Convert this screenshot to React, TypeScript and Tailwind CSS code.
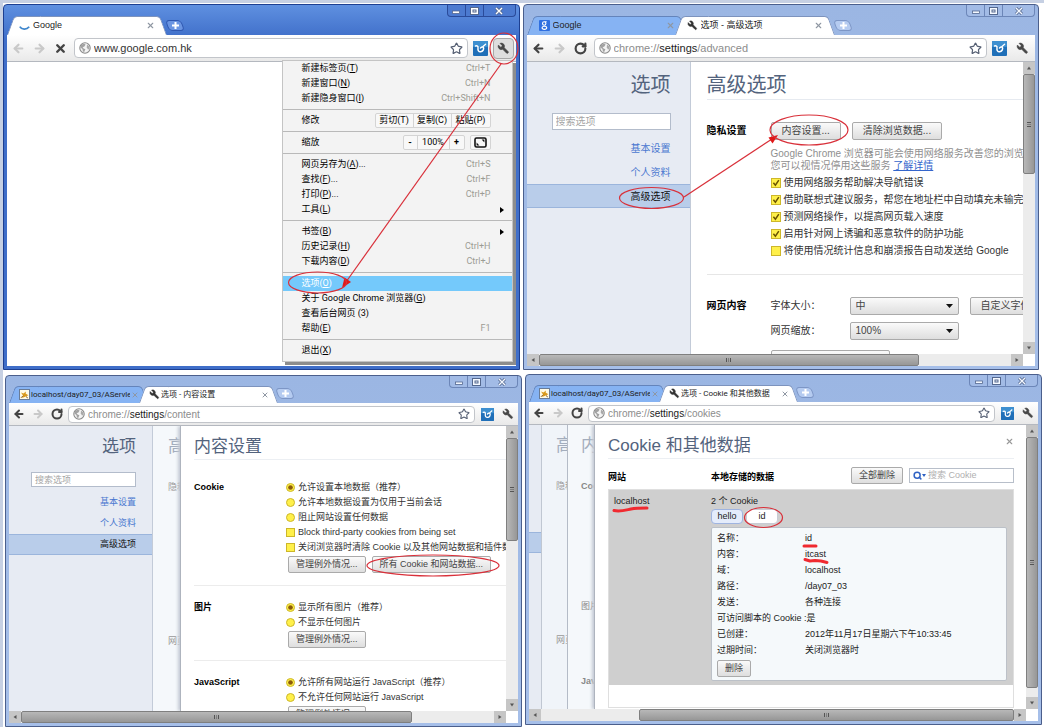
import type { ReactNode } from "react";
import { ArrowLeft, ArrowRight, RotateCw, Search, Star, X } from "lucide-react";

/* ---------- icons ---------- */

function WrenchIcon({ className }: { className: string }) {
  return (
    <svg viewBox="0 0 24 24" className={className} aria-hidden="true">
      <path
        transform="matrix(-1 0 0 1 24 0)"
        fill="currentColor"
        stroke="currentColor"
        strokeWidth="1"
        d="M14.7 6.3a1 1 0 0 0 0 1.4l1.6 1.6a1 1 0 0 0 1.4 0l3.77-3.77a6 6 0 0 1-7.94 7.94l-6.91 6.91a2.12 2.12 0 0 1-3-3l6.91-6.91a6 6 0 0 1 7.94-7.94l-3.76 3.76z"
      />
    </svg>
  );
}

function GlobeIcon() {
  return (
    <svg viewBox="0 0 12 12" className="size-3 shrink-0" aria-hidden="true">
      <circle cx="6" cy="6" r="5.2" fill="#f4f4f4" stroke="#8a8a8a" strokeWidth="1.1" />
      <path d="M2 3.2 4.6 1.6 6.6 2.4 5.4 4.4 3.6 5.2 4.6 6.6 6.4 7.2 5.6 9 5 10.6 3.8 8.8 3.4 7 1.4 5.6Z" fill="#a2a2a2" />
      <path d="M8 2.4 10 4.2 10.4 7 9 7.4 7.8 5.4Z" fill="#a9a9a9" />
    </svg>
  );
}

function ExtensionIcon({ className }: { className: string }) {
  return (
    <svg viewBox="0 0 15 15" className={className} aria-hidden="true">
      <rect width="15" height="15" rx="1" fill="#1f6fb8" />
      <rect width="15" height="6" rx="1" fill="#3d8fd0" />
      <path d="M2.5 5C4 4.4 5.4 5 5 7c-.4 2.4.8 4 2.6 3.8 2.2-.2 3.6-2.4 2.8-4.4-.6-1-1.8-.4-3 .6" fill="none" stroke="#fff" strokeWidth="1.5" strokeLinecap="round" />
      <path d="m10 5.6 2.6-2.4" stroke="#fff" strokeWidth="1.3" strokeLinecap="round" />
    </svg>
  );
}

function SpinnerIcon() {
  return (
    <svg viewBox="0 0 11 11" className="size-[11px] shrink-0" aria-hidden="true">
      <path d="M.8 6.6C2.6 9.8 7.6 10 10.2 6.8" fill="none" stroke="#3f86cc" strokeWidth="1.8" />
    </svg>
  );
}

function GoogleIcon() {
  return (
    <svg viewBox="0 0 11 11" className="size-[11px] shrink-0" aria-hidden="true">
      <rect width="11" height="11" rx="1" fill="#2f6fe0" />
      <circle cx="5.2" cy="3.5" r="1.7" fill="none" stroke="#fff" strokeWidth="1.1" />
      <ellipse cx="5.4" cy="7.8" rx="2.3" ry="1.6" fill="none" stroke="#fff" strokeWidth="1.1" />
      <path d="M5.6 1.8h2.2" stroke="#fff" strokeWidth=".9" />
    </svg>
  );
}

function TomcatIcon() {
  return (
    <svg viewBox="0 0 11 11" className="size-[11px] shrink-0" aria-hidden="true">
      <rect x=".5" y=".5" width="10" height="10" fill="#fffbe6" stroke="#6a7c96" />
      <path d="M2 3.4 4.4 4.4 7 2.4 6.6 4.6 9.4 6.2 6.8 7.6 3 9 4 6.6Z" fill="#d99a1c" />
      <path d="m2 8.8 2-2M7 7.6l1.8 1.4" stroke="#7a4a10" strokeWidth=".9" />
    </svg>
  );
}

/* ---------- window chrome ---------- */

type Tab = { title: string; icon: ReactNode; active?: boolean };

function TabShape({ tab, compact }: { tab: Tab; compact: boolean }) {
  const fill = tab.active
    ? "z-10 before:bg-white after:bg-white before:border-[#7d93bd] after:border-[#7d93bd]"
    : "before:bg-[#86b3f3] after:bg-[#86b3f3] before:border-[#6484bb] after:border-[#6484bb]";
  const size = compact
    ? "h-[17px] w-[138px] gap-px pl-[10px] pr-2 font-['Roboto','Noto_Sans_CJK_SC',sans-serif] text-[8px] not-first:-ml-2"
    : "h-[19px] w-40 gap-[3px] px-3 text-[9px] not-first:-ml-3";
  return (
    <div
      className={`relative flex items-center text-[#222] before:absolute before:inset-y-0 before:left-0 before:w-3/4 before:origin-bottom before:-skew-x-[20deg] before:rounded-tl before:border-l before:border-t after:absolute after:inset-y-0 after:right-0 after:w-3/4 after:origin-bottom after:skew-x-[20deg] after:rounded-tr after:border-r after:border-t ${fill} ${size}`}
    >
      <span className="relative z-10 shrink-0">{tab.icon}</span>
      <span className="relative z-10 min-w-0 flex-1 overflow-hidden whitespace-nowrap">{tab.title}</span>
      <button type="button" aria-label="关闭标签页" className="relative z-10 shrink-0 text-[#8f97a3]">
        <X className={compact ? "size-2" : "size-[9px]"} strokeWidth={3} />
      </button>
    </div>
  );
}

function WindowControls({ focused }: { focused: boolean }) {
  const tone = focused ? "border-[#2a4b9a] text-white bg-[#4c7ad0]" : "border-[#6c86b8] text-[#f4f8ff] bg-[#a2bbe6]";
  return (
    <div className={`flex h-3 shrink-0 self-start rounded-b-sm border border-t-0 ${tone}`}>
      <button type="button" aria-label="最小化" className="grid w-[18px] place-items-center border-r border-inherit">
        <svg viewBox="0 0 8 6" className="h-1.5 w-2"><rect x=".5" y="3" width="7" height="2.5" fill="currentColor" stroke="#54688f" strokeWidth=".8" /></svg>
      </button>
      <button type="button" aria-label="最大化" className="grid w-[18px] place-items-center border-r border-inherit">
        <svg viewBox="0 0 9 8" className="h-2 w-[9px]">
          <rect x=".5" y=".5" width="8" height="7" fill="currentColor" stroke="#54688f" />
          <rect x="3" y="3" width="3" height="2" fill="none" stroke="#54688f" />
        </svg>
      </button>
      <button type="button" aria-label="关闭" className="grid w-[31px] place-items-center">
        <svg viewBox="0 0 8 8" className="size-2"><path d="m1 1 6 6M7 1 1 7" stroke="#54688f" strokeWidth="3" /><path d="m1 1 6 6M7 1 1 7" stroke="currentColor" strokeWidth="1.4" /></svg>
      </button>
    </div>
  );
}

type WindowProps = {
  tabs: Tab[];
  url: ReactNode;
  focused?: boolean;
  compact?: boolean;
  loading?: boolean;
  className?: string;
  children?: ReactNode;
};

function BrowserWindow({ tabs, url, focused = false, compact = false, loading = false, className = "", children }: WindowProps) {
  const frame = focused
    ? "border-[#1d3f91] bg-linear-to-b from-[#5f90e0] via-[#3f6ec9] via-[34px] to-[#3f6ec9]"
    : "border-[#4b5f8c] bg-linear-to-b from-[#9bb6e3] to-[#a6bfe9]";
  const icon = compact ? "size-3" : "size-[13px]";
  return (
    <section className={`relative flex min-w-0 flex-1 basis-0 flex-col rounded-t border px-[3px] pb-[3px] ${frame} ${className}`}>
      <header className={`flex shrink-0 justify-between ${compact ? "h-[27px]" : "h-[30px]"}`}>
        <div className="flex items-end">
          {tabs.map((tab) => (
            <TabShape key={tab.title} tab={tab} compact={compact} />
          ))}
          <button
            type="button"
            aria-label="新标签页"
            className={`mb-1 grid h-[11px] w-4 skew-x-[20deg] place-items-center rounded-sm border ${focused ? "border-[#2f57b0] bg-[#6b95e2]" : "border-[#7d96c6] bg-[#b5cbf0]"}`}
          >
            <svg viewBox="0 0 7 7" className="size-[7px] -skew-x-[20deg]"><path d="M3.5 0v7M0 3.5h7" stroke="#fff" strokeWidth="2" /></svg>
          </button>
        </div>
        <WindowControls focused={focused} />
      </header>

      <div className={`flex shrink-0 items-center border-b border-[#b4b8bf] bg-linear-to-b from-white to-[#e9e9e9] pr-0.5 ${compact ? "h-[23px] pl-1" : "h-[27px] pl-[5px]"}`}>
        <div className={`flex text-[#444] ${compact ? "gap-[7px]" : "gap-2"}`}>
          <button type="button" aria-label="后退" className={focused ? "text-[#c9c9c9]" : ""}><ArrowLeft className={icon} strokeWidth={4} /></button>
          <button type="button" aria-label="前进" className="text-[#c9c9c9]"><ArrowRight className={icon} strokeWidth={4} /></button>
          <button type="button" aria-label={loading ? "停止" : "重新加载"}>
            {loading ? <X className={icon} strokeWidth={4.5} /> : <RotateCw className={icon} strokeWidth={4} />}
          </button>
        </div>
        <div className={`flex min-w-0 flex-1 items-center gap-[3px] rounded-sm border border-[#c2c5ca] bg-white px-1 ${compact ? "ml-[5px] h-[17px] text-[10px]" : "ml-[7px] h-5 text-[11px]"}`}>
          <GlobeIcon />
          <span className="min-w-0 flex-1 truncate text-[#8c8c8c]">{url}</span>
          <button type="button" aria-label="添加书签" className="text-[#555f73]"><Star className={icon} strokeWidth={2.2} /></button>
        </div>
        <button type="button" aria-label="扩展程序" className={compact ? "ml-1.5" : "ml-[5px]"}>
          <ExtensionIcon className={compact ? "size-[13px]" : "size-[15px]"} />
        </button>
        <button
          type="button"
          aria-label="自定义及控制"
          className={`ml-[5px] grid place-items-center rounded-sm text-[#474747] ${compact ? "h-[17px] w-[17px]" : "size-[21px]"} ${focused ? "border border-[#a8a8a8] bg-[#dedede]" : ""}`}
        >
          <WrenchIcon className={icon} />
        </button>
      </div>
      {children}
    </section>
  );
}

/* ---------- scroll bars ---------- */

type BarProps = { before: number; thumb: number; after: number };

function ArrowEnd({ turn }: { turn: string }) {
  return (
    <span className="grid size-3 shrink-0 place-items-center bg-[#c6c6c6]">
      <svg viewBox="0 0 6 6" className={`size-1.5 ${turn}`}><path d="M1 4.5h4L3 1.5Z" fill="#555" /></svg>
    </span>
  );
}

function VScroll({ before, thumb, after }: BarProps) {
  return (
    <div className="flex w-3 shrink-0 flex-col bg-[#ececec]" aria-hidden="true">
      <ArrowEnd turn="" />
      <span style={{ flexGrow: before }} />
      <span className="grid place-items-center rounded-xs border border-[#7f7f7f] bg-linear-to-r from-[#b8b8b8] to-[#979797]" style={{ flexGrow: thumb }}>
        <span className="h-[5px] w-1 border-y border-[#555] bg-linear-to-b from-transparent from-40% via-[#555] via-40% to-transparent to-60%" />
      </span>
      <span style={{ flexGrow: after }} />
      <ArrowEnd turn="rotate-180" />
    </div>
  );
}

function HScroll({ before, thumb, after }: BarProps) {
  return (
    <div className="flex h-3 shrink-0 bg-white pr-3" aria-hidden="true">
      <ArrowEnd turn="-rotate-90" />
      <span className="bg-[#ececec]" style={{ flexGrow: before }} />
      <span className="grid place-items-center rounded-xs border border-[#7f7f7f] bg-linear-to-b from-[#b8b8b8] to-[#979797]" style={{ flexGrow: thumb }}>
        <span className="h-1 w-[5px] border-x border-[#555] bg-linear-to-r from-transparent from-40% via-[#555] via-40% to-transparent to-60%" />
      </span>
      <span className="bg-[#ececec]" style={{ flexGrow: after }} />
      <ArrowEnd turn="rotate-90" />
    </div>
  );
}

function ScrollFrame({ v, h, children }: { v: BarProps; h: BarProps; children: ReactNode }) {
  return (
    <div className="flex min-h-0 flex-1 flex-col bg-white">
      <div className="flex min-h-0 flex-1">
        <div className="flex min-w-0 flex-1 overflow-hidden">{children}</div>
        <VScroll {...v} />
      </div>
      <HScroll {...h} />
    </div>
  );
}

/* ---------- form parts ---------- */

function PushButton({ children, compact = false, className = "" }: { children: ReactNode; compact?: boolean; className?: string }) {
  return (
    <button
      type="button"
      className={`shrink-0 whitespace-nowrap rounded-xs border border-[#aaa] bg-linear-to-b from-[#fafafa] to-[#dedede] text-[#444] ${compact ? "h-[17px] px-[7px] leading-[15px]" : "h-[18px] px-2.5 leading-4"} ${className}`}
    >
      {children}
    </button>
  );
}

type OptionProps = { type: "checkbox" | "radio"; name?: string; checked?: boolean; compact?: boolean; children: ReactNode };

function Option({ type, name, checked = false, compact = false, children }: OptionProps) {
  const box = compact ? "size-[9px]" : "size-2.5";
  return (
    <label className={`flex items-center gap-[3px] whitespace-nowrap text-[#333] ${compact ? "h-[15px]" : "h-[17px]"}`}>
      <span className={`grid shrink-0 ${box}`}>
        <input
          type={type}
          name={name}
          defaultChecked={checked}
          className={`peer col-start-1 row-start-1 appearance-none border border-[#cdb72a] bg-[#fff04a] ${type === "radio" ? "rounded-full" : ""} ${box}`}
        />
        <svg viewBox="0 0 10 10" className={`pointer-events-none invisible col-start-1 row-start-1 peer-checked:visible ${box}`} aria-hidden="true">
          {type === "radio" ? <circle cx="5" cy="5" r="2.6" fill="#8a5a0c" /> : <path d="m2.4 4.8 2 2.4 3.4-5" fill="none" stroke="#6b5300" strokeWidth="1.5" />}
        </svg>
      </span>
      <span>{children}</span>
    </label>
  );
}

function SelectBox({ id, value }: { id: string; value: string }) {
  return (
    <span className="grid w-[109px] shrink-0 items-center">
      <select id={id} defaultValue={value} className="col-start-1 row-start-1 h-[18px] appearance-none rounded-xs border border-[#aaa] bg-linear-to-b from-[#fafafa] to-[#dedede] pl-[5px] leading-4 text-[#444]">
        <option>{value}</option>
      </select>
      <svg viewBox="0 0 7 4" className="pointer-events-none col-start-1 row-start-1 mr-1.5 h-1 w-[7px] justify-self-end" aria-hidden="true"><path d="M0 0h7L3.5 4Z" fill="#111" /></svg>
    </span>
  );
}

function Sidebar({ compact = false }: { compact?: boolean }) {
  const row = compact ? "h-[21px] pr-4" : "h-6 pr-[19px]";
  return (
    <aside className={`shrink-0 border-r border-[#c3cbd8] bg-[#e7ebf3] ${compact ? "w-36 pt-[9px] text-[9px]" : "w-[164px] pt-[9px] text-[10px]"}`}>
      <h2 className={`text-right text-[#53637d] ${compact ? "pr-4 text-[17px] leading-6" : "pr-[19px] text-[20px] leading-7"}`}>选项</h2>
      <div className={compact ? "mt-[13px] pl-[22px] pr-4" : "mt-3.5 pl-[25px] pr-[19px]"}>
        <input
          type="text"
          aria-label="搜索选项"
          placeholder="搜索选项"
          className={`block w-full border border-[#b3bccb] bg-white px-[3px] placeholder:text-[#a5a5a5] ${compact ? "h-[15px]" : "h-[17px]"}`}
        />
      </div>
      <nav className={`flex flex-col text-right ${compact ? "mt-[5px]" : "mt-1.5"}`}>
        <a href="#basic" className={`flex items-center justify-end text-[#4a78d0] ${row}`}>基本设置</a>
        <a href="#personal" className={`flex items-center justify-end text-[#4a78d0] ${row}`}>个人资料</a>
        <a href="#advanced" className={`flex items-center justify-end border-y border-[#9bb5dc] bg-[#b9cdea] text-[#111] ${row}`}>高级选项</a>
      </nav>
    </aside>
  );
}

/* ---------- wrench menu ---------- */

function MenuItem({ label, hotkey, keys, submenu = false, selected = false }: { label: string; hotkey?: string; keys?: string; submenu?: boolean; selected?: boolean }) {
  const [head, tail = ""] = label.split("|");
  return (
    <button type="button" className={`flex h-[15px] w-full items-center pl-[19px] text-left ${selected ? "bg-[#74c9fb] text-white" : "text-black"}`}>
      <span className="flex-1">
        {head}
        {hotkey && <>(<u>{hotkey}</u>)</>}
        {tail}
      </span>
      {keys && <span className="pr-[21px] text-[#9c9c94]">{keys}</span>}
      {submenu && <svg viewBox="0 0 4 6" className="mr-2 h-1.5 w-1" aria-hidden="true"><path d="M0 0v6l4-3Z" fill="#000" /></svg>}
    </button>
  );
}

function MenuRule() {
  return <hr className="my-[3px] border-[#b9b9b9]" />;
}

function WrenchMenu() {
  return (
    <div className="absolute right-1.5 top-[55px] z-20 w-[231px] border border-[#c4c4c4] bg-[#f3f3f3] pb-[3px] font-['Roboto','Noto_Sans_CJK_SC',sans-serif] text-[9px] leading-[15px] shadow-[3px_3px_0_#8d8d8d]">
      <MenuItem label="新建标签页" hotkey="T" keys="Ctrl+T" />
      <MenuItem label="新建窗口" hotkey="N" keys="Ctrl+N" />
      <MenuItem label="新建隐身窗口" hotkey="I" keys="Ctrl+Shift+N" />
      <MenuRule />
      <div className="flex h-[15px] items-center pl-[19px] pr-[21px]">
        <span className="flex-1">修改</span>
        <span className="flex divide-x divide-[#d4d4d4] rounded-xs border border-[#d4d4d4] bg-[#f8f8f8] leading-[13px]">
          <button type="button" className="w-[38px]">剪切(T)</button>
          <button type="button" className="w-[38px]">复制(C)</button>
          <button type="button" className="w-[38px]">粘贴(P)</button>
        </span>
      </div>
      <MenuRule />
      <div className="flex h-[15px] items-center pl-[19px] pr-[21px]">
        <span className="flex-1">缩放</span>
        <span className="flex divide-x divide-[#d4d4d4] rounded-xs border border-[#d4d4d4] bg-[#f8f8f8] leading-[13px]">
          <button type="button" className="w-3.5 font-bold">-</button>
          <span className="w-8 text-center">100%</span>
          <button type="button" className="w-3.5 font-bold">+</button>
        </span>
        <button type="button" aria-label="全屏" className="ml-[5px] grid h-[15px] w-[21px] place-items-center rounded-xs border border-[#d4d4d4] bg-[#f8f8f8]">
          <svg viewBox="0 0 13 11" className="h-[11px] w-[13px]">
            <rect x="1" y="1" width="11" height="9" rx="1.5" fill="none" stroke="#111" strokeWidth="1.6" />
            <path d="M10.400 2.600V5.400L7.600 2.600ZM2.600 8.400V5.600l2.800 2.800Z" fill="#111" />
          </svg>
        </button>
      </div>
      <MenuRule />
      <MenuItem label="网页另存为|..." hotkey="A" keys="Ctrl+S" />
      <MenuItem label="查找|..." hotkey="F" keys="Ctrl+F" />
      <MenuItem label="打印|..." hotkey="P" keys="Ctrl+P" />
      <MenuItem label="工具" hotkey="L" submenu />
      <MenuRule />
      <MenuItem label="书签" hotkey="B" submenu />
      <MenuItem label="历史记录" hotkey="H" keys="Ctrl+H" />
      <MenuItem label="下载内容" hotkey="D" keys="Ctrl+J" />
      <MenuRule />
      <MenuItem label="选项" hotkey="O" selected />
      <MenuItem label="关于 Google Chrome 浏览器" hotkey="G" />
      <MenuItem label="查看后台网页 (3)" />
      <MenuItem label="帮助" hotkey="E" keys="F1" />
      <MenuRule />
      <MenuItem label="退出" hotkey="X" />
    </div>
  );
}

/* ---------- pages ---------- */

function AdvancedPage() {
  return (
    <main className="min-w-0 flex-1 overflow-hidden pl-4 pt-[9px] text-[10px]">
      <h1 className="border-b border-[#e6eaf0] text-[20px] leading-7 text-[#53637d]">高级选项</h1>
      <section className="flex border-b border-[#e6e6e6] pb-[15px] pt-[22px]">
        <h3 className="w-16 shrink-0 font-bold leading-[18px]">隐私设置</h3>
        <div className="min-w-0 flex-1">
          <div className="flex gap-[11px]">
            <PushButton>内容设置...</PushButton>
            <PushButton>清除浏览数据...</PushButton>
          </div>
          <p className="mb-0.5 mt-2 whitespace-nowrap leading-3 text-[#8f8f8f]">
            Google Chrome 浏览器可能会使用网络服务改善您的浏览体
            <br />
            您可以视情况停用这些服务 <a href="#learn" className="text-[#3566cc] underline">了解详情</a>
          </p>
          <Option type="checkbox" checked>使用网络服务帮助解决导航错误</Option>
          <Option type="checkbox" checked>借助联想式建议服务，帮您在地址栏中自动填充未输完的</Option>
          <Option type="checkbox" checked>预测网络操作，以提高网页载入速度</Option>
          <Option type="checkbox" checked>启用针对网上诱骗和恶意软件的防护功能</Option>
          <Option type="checkbox">将使用情况统计信息和崩溃报告自动发送给 Google</Option>
        </div>
      </section>
      <section className="flex pt-[22px]">
        <h3 className="w-16 shrink-0 font-bold leading-[18px]">网页内容</h3>
        <div className="min-w-0 flex-1 leading-[18px] text-[#333]">
          <div className="mb-[7px] flex">
            <label htmlFor="font-size" className="w-[79px] shrink-0">字体大小：</label>
            <SelectBox id="font-size" value="中" />
            <PushButton className="ml-[11px]">自定义字体</PushButton>
          </div>
          <div className="mb-2.5 flex">
            <label htmlFor="zoom" className="w-[79px] shrink-0">网页缩放：</label>
            <SelectBox id="zoom" value="100%" />
          </div>
          <button type="button" aria-label="语言设置" className="block h-[18px] w-[119px] rounded-xs border border-[#aaa] bg-linear-to-b from-[#fafafa] to-[#dedede]" />
        </div>
      </section>
    </main>
  );
}

function ContentSection({ title, first = false, options, children }: { title: string; first?: boolean; options: ReactNode; children: ReactNode }) {
  return (
    <section className={`flex border-b border-[#ececec] pb-3 ${first ? "pt-5" : "pt-3.5"}`}>
      <h3 className="w-[92px] shrink-0 text-[9px] font-bold leading-[15px]">{title}</h3>
      <div className="min-w-0 flex-1">
        {options}
        <div className="mt-px flex gap-1.5 pl-0.5">{children}</div>
      </div>
    </section>
  );
}

function ContentPage() {
  return (
    <>
      <div className="w-[27px] shrink-0 overflow-hidden bg-[#f5f8fb] pl-[15px] pt-[9px] text-[9px] leading-[15px] text-[#999]">
        <p className="text-[17px] leading-6 text-[#a3adbd]">高</p>
        <p className="mt-[21px] whitespace-nowrap">隐私</p>
        <p className="mt-[139px] whitespace-nowrap">网页</p>
      </div>
      <main className="z-10 min-w-0 flex-1 overflow-hidden border-l border-[#aeb4be] bg-white pl-[13px] pt-[9px] text-[9px] shadow-[-2px_0_3px_#c4cad4]">
        <h1 className="border-b border-[#eceff3] text-[17px] leading-6 text-[#53637d]">内容设置</h1>
        <ContentSection
          title="Cookie"
          first
          options={
            <>
              <Option compact type="radio" name="cookie" checked>允许设置本地数据（推荐）</Option>
              <Option compact type="radio" name="cookie">允许本地数据设置为仅用于当前会话</Option>
              <Option compact type="radio" name="cookie">阻止网站设置任何数据</Option>
              <Option compact type="checkbox">Block third-party cookies from being set</Option>
              <Option compact type="checkbox">关闭浏览器时清除 Cookie 以及其他网站数据和插件数据</Option>
            </>
          }
        >
          <PushButton compact>管理例外情况...</PushButton>
          <PushButton compact>所有 Cookie 和网站数据...</PushButton>
        </ContentSection>
        <ContentSection
          title="图片"
          options={
            <>
              <Option compact type="radio" name="image" checked>显示所有图片（推荐）</Option>
              <Option compact type="radio" name="image">不显示任何图片</Option>
            </>
          }
        >
          <PushButton compact>管理例外情况...</PushButton>
        </ContentSection>
        <ContentSection
          title="JavaScript"
          options={
            <>
              <Option compact type="radio" name="script" checked>允许所有网站运行 JavaScript（推荐）</Option>
              <Option compact type="radio" name="script">不允许任何网站运行 JavaScript</Option>
            </>
          }
        >
          <PushButton compact>管理例外情况...</PushButton>
        </ContentSection>
      </main>
    </>
  );
}

const cookieFields: [string, string][] = [
  ["名称：", "id"],
  ["内容：", "itcast"],
  ["域：", "localhost"],
  ["路径：", "/day07_03"],
  ["发送：", "各种连接"],
  ["可访问脚本的 Cookie :", "是"],
  ["已创建：", "2012年11月17日星期六下午10:33:45"],
  ["过期时间：", "关闭浏览器时"],
];

function CookiesPage() {
  return (
    <>
      <div className="w-3 shrink-0 bg-[#e7ebf3] pt-[107px]">
        <div className="h-[21px] border-y border-[#9bb5dc] bg-[#b9cdea]" />
      </div>
      <div className="w-[26px] shrink-0 overflow-hidden border-l border-[#c0c7d2] bg-[#f0f4f9] pl-3.5 pt-[9px] text-[9px] leading-[15px] text-[#999]">
        <p className="text-[17px] leading-6 text-[#a3adbd]">高</p>
        <p className="mt-[21px] whitespace-nowrap">隐私</p>
        <p className="mt-[139px] whitespace-nowrap">网页</p>
      </div>
      <div className="w-[27px] shrink-0 overflow-hidden border-l border-[#b4bbc7] bg-[#f5f8fb] pl-[13px] pt-[9px] text-[9px] leading-[15px] text-[#888]">
        <p className="text-[17px] leading-6 text-[#a3adbd]">内</p>
        <p className="mt-[21px] font-bold">Cookie</p>
        <p className="mt-[105px] whitespace-nowrap">图片</p>
        <p className="mt-[60px] font-bold">JavaScript</p>
      </div>
      <main className="z-10 min-w-0 flex-1 overflow-hidden border-l border-[#aeb4be] bg-white pl-[13px] pr-3 pt-[9px] text-[9px] shadow-[-2px_0_3px_#c4cad4]">
        <div className="flex items-start justify-between border-b border-[#eceff3]">
          <h1 className="text-[17px] leading-6 text-[#53637d]">Cookie 和其他数据</h1>
          <button type="button" aria-label="关闭" className="mt-[3px] text-[#999]"><X className="size-[9px]" strokeWidth={3} /></button>
        </div>
        <div className="mt-[7px] flex items-center">
          <h3 className="w-[103px] pt-[5px] font-bold">网站</h3>
          <h3 className="flex-1 pt-[5px] font-bold">本地存储的数据</h3>
          <PushButton compact>全部删除</PushButton>
          <label className="ml-1.5 flex h-[15px] w-[105px] items-center border border-[#b8bfca] bg-white pl-[3px]">
            <Search className="size-[9px] shrink-0 text-[#2f62c4]" strokeWidth={4} />
            <svg viewBox="0 0 4 3" className="h-[3px] w-1 shrink-0" aria-hidden="true"><path d="M0 0h4L2 3Z" fill="#2f62c4" /></svg>
            <input type="text" aria-label="搜索 Cookie" placeholder="搜索 Cookie" className="ml-0.5 min-w-0 flex-1 outline-none placeholder:text-[#b0b0b0]" />
          </label>
        </div>
        <div className="mt-1 border border-[#dfdfdf] pb-[22px] text-[#222]">
          <div className="flex bg-[#cfcfcf] pb-1 pl-[5px] pr-1.5 pt-1 leading-[15px]">
            <span className="w-[97px] shrink-0">localhost</span>
            <div className="min-w-0 flex-1">
              <p>2 个 Cookie</p>
              <div className="flex gap-[3px] leading-[13px]">
                <button type="button" className="h-[15px] w-8 rounded-sm border border-[#9fb4e0] bg-[#e4ecfb]">hello</button>
                <button type="button" className="h-[15px] w-8 rounded-sm border border-[#c8ccd4] bg-white">id</button>
              </div>
              <div className="mt-[3px] rounded-xs border border-[#bcc1c8] bg-[#f5f9fb] py-[3px] pl-[5px]">
                <dl>
                  {cookieFields.map(([name, value]) => (
                    <div key={name} className="flex h-4 items-center whitespace-nowrap">
                      <dt className="min-w-[88px]">{name}</dt>
                      <dd>{value}</dd>
                    </div>
                  ))}
                </dl>
                <PushButton compact className="mt-px block">删除</PushButton>
              </div>
            </div>
          </div>
        </div>
      </main>
    </>
  );
}

/* ---------- red pen marks ---------- */

const pen = { fill: "none", stroke: "#d9303a", strokeWidth: 1.2 };

export default function App() {
  const tomcatTab: Tab = { title: "localhost/day07_03/AServlet", icon: <TomcatIcon /> };
  const wrench = <WrenchIcon className="size-[11px] text-[#333]" />;
  return (
    <div className="grid h-screen grid-rows-[367fr_357fr] overflow-hidden border-l-3 border-t-3 border-[#c6d0e3] bg-white font-['Liberation_Sans','Noto_Sans_CJK_SC',sans-serif]" lang="zh-CN">
      <div className="flex min-h-0 gap-[3px] pr-[5px] pt-px">
        <BrowserWindow focused loading tabs={[{ title: "Google", icon: <SpinnerIcon />, active: true }]} url={<span className="text-[#333]">www.google.com.hk</span>}>
          <div className="min-h-0 flex-1 bg-white" />
          <WrenchMenu />
          <svg viewBox="0 0 240 366" className="pointer-events-none absolute -right-px -top-px z-30 h-[366px] w-60" aria-hidden="true">
            <ellipse cx="224" cy="44.500" rx="14" ry="15.500" {...pen} />
            <path d="M221 60 66 278" {...pen} />
            <path d="m62 284 2.500-10.500 6.500 4.500Z" fill="#e01818" />
            <ellipse cx="37.500" cy="278.500" rx="29" ry="10.500" {...pen} />
          </svg>
        </BrowserWindow>

        <BrowserWindow
          tabs={[{ title: "Google", icon: <GoogleIcon /> }, { title: "选项 - 高级选项", icon: wrench, active: true }]}
          url={<>chrome://<span className="text-[#222]">settings</span>/advanced</>}
        >
          <ScrollFrame v={{ before: 0, thumb: 95, after: 171 }} h={{ before: 0, thumb: 380, after: 93 }}>
            <Sidebar />
            <AdvancedPage />
          </ScrollFrame>
          <svg viewBox="0 0 340 220" className="pointer-events-none absolute -left-px -top-px z-30 h-[220px] w-[340px]" aria-hidden="true">
            <ellipse cx="128.500" cy="194" rx="32" ry="10.500" {...pen} />
            <path d="m161 193 88-58" {...pen} />
            <path d="m255 131-9.500 2.500 4 6Z" fill="#e01818" />
            <ellipse cx="286" cy="126" rx="39" ry="15" {...pen} />
          </svg>
        </BrowserWindow>
      </div>

      <div className="flex min-h-0 gap-[3px] pl-0.5 pr-0.5">
        <BrowserWindow
          compact
          className="mt-[5px]"
          tabs={[tomcatTab, { title: "选项 - 内容设置", icon: wrench, active: true }]}
          url={<>chrome://<span className="text-[#222]">settings</span>/content</>}
        >
          <ScrollFrame v={{ before: 0, thumb: 99, after: 163 }} h={{ before: 0, thumb: 393, after: 84 }}>
            <Sidebar compact />
            <ContentPage />
          </ScrollFrame>
          <svg viewBox="0 0 517 210" className="pointer-events-none absolute -left-px -top-px z-30 h-[210px] w-[517px]" aria-hidden="true">
            <ellipse cx="428" cy="190.500" rx="66" ry="10.500" {...pen} />
          </svg>
        </BrowserWindow>

        <BrowserWindow
          compact
          className="mb-0.5 mt-1"
          tabs={[tomcatTab, { title: "选项 - Cookie 和其他数据", icon: wrench, active: true }]}
          url={<>chrome://<span className="text-[#222]">settings</span>/cookies</>}
        >
          <ScrollFrame v={{ before: 0, thumb: 254, after: 9 }} h={{ before: 100, thumb: 376, after: 0 }}>
            <CookiesPage />
          </ScrollFrame>
          <svg viewBox="0 0 340 210" className="pointer-events-none absolute -left-px -top-px z-30 h-[210px] w-[340px]" aria-hidden="true">
            <ellipse cx="238.500" cy="143.500" rx="19" ry="10" {...pen} />
            <g fill="none" stroke="#f02a30" strokeWidth="3" strokeLinecap="round" strokeLinejoin="round">
              <path d="M89 136.500c6 1.500 12-.5 17-1.500s10-1 16-1" />
              <path d="M279 172h12" />
              <path d="m280 185.500 5 1.500 5-.5 6 .5 6 1.500" />
            </g>
          </svg>
        </BrowserWindow>
      </div>
    </div>
  );
}
